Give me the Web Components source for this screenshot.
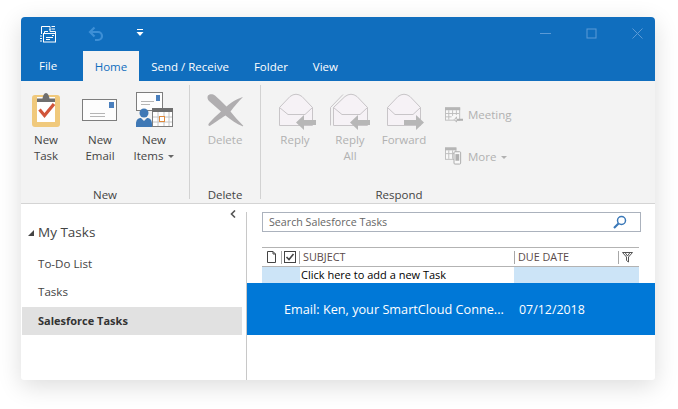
<!DOCTYPE html>
<html>
<head>
<meta charset="utf-8">
<title>Tasks</title>
<style>
  html, body { margin: 0; height: 100%; background: #fff; }
  body { box-sizing: border-box; padding: 17px 0 0 21px; font-family: "Open Sans", "Liberation Sans", sans-serif; color: #333; }
</style>
</head>
<body>
<app-window>
  <title-bar>
    <svg slot="icon" width="18" height="18" viewBox="0 0 18 18" fill="none" stroke="#fff" stroke-width="1">
      <path d="M2.500 9V1.500H11V5M12.500 1.500H16M12.500 4H16M1 11h2M1 13.500h2M1 16h2M5.500 8.500V6.500H9M11 4V6.500H16.500V8"/>
      <rect x="4.500" y="8.500" width="12" height="8.500"/>
      <path d="M7 12.500h7M7 14.500h4M13 10.500h2"/>
    </svg>
    <svg slot="undo" width="16" height="16" viewBox="0 0 16 16" fill="none" stroke="#3d8fd6" stroke-width="2.200">
      <path d="M2 6h8a4 4 0 0 1 0 8H7"/>
      <path d="M6.500 1.500L2 6L6.500 10.500"/>
    </svg>
    <svg slot="more" width="8" height="8" viewBox="0 0 8 8" fill="#fff">
      <rect x="1" y="0" width="6" height="1"/>
      <path d="M0.500 3h7L4 7z"/>
    </svg>
  </title-bar>
  <ribbon-tabs>
    <ribbon-tab class="file">File</ribbon-tab>
    <ribbon-tab active>Home</ribbon-tab>
    <ribbon-tab>Send / Receive</ribbon-tab>
    <ribbon-tab>Folder</ribbon-tab>
    <ribbon-tab>View</ribbon-tab>
  </ribbon-tabs>
  <ribbon-bar>
    <ribbon-group label="New" style="--body:168px">
      <ribbon-button style="--w:50px">
        <svg slot="icon" width="30" height="36" viewBox="0 0 30 36">
          <rect x="1" y="3" width="28" height="32" rx="3" fill="#f0c97c"/>
          <rect x="6" y="5" width="18" height="25" fill="#fff"/>
          <path d="M6 10V6.500H11.500C12 3.500 13 1 15 1S18 3.500 18.500 6.500H24V10z" fill="#6e6e6e"/>
          <path d="M8.500 17.500L13.500 23.500L23 12" fill="none" stroke="#d1553a" stroke-width="3.200"/>
        </svg>
        New<br>Task
      </ribbon-button>
      <ribbon-button style="--w:58px">
        <svg slot="icon" width="38" height="36" viewBox="0 0 38 36">
          <rect x="1.500" y="7.500" width="34" height="21" fill="#fdfdfd" stroke="#7d7d7d"/>
          <rect x="28" y="10" width="5" height="6" fill="#4a7fbd"/>
          <path d="M9 21.500h15M9 24.500h15" stroke="#b5b5b5"/>
        </svg>
        New<br>Email
      </ribbon-button>
      <ribbon-button style="--w:50px" caret>
        <svg slot="icon" width="38" height="36" viewBox="0 0 38 36">
          <rect x="1.500" y="0.500" width="26" height="18" fill="#fdfdfd" stroke="#7d7d7d"/>
          <rect x="21" y="3" width="4" height="6" fill="#4a7fbd"/>
          <path d="M6 9.500h13M6 12.500h9" stroke="#b5b5b5"/>
          <rect x="17.500" y="16.500" width="20" height="18" fill="#fff" stroke="#7d7d7d"/>
          <rect x="17" y="16" width="21" height="4" fill="#6e6e6e"/>
          <path d="M23 20v14M29 20v14M34 20v14M18 25h19M18 30h19" stroke="#c4c4c4"/>
          <rect x="24.500" y="24.500" width="5" height="5" fill="#fff" stroke="#e08a3c"/>
          <circle cx="9" cy="21" r="4.500" fill="#3f78b5"/>
          <path d="M1 35v-3c0-4 2-6 5-6l3 3l3-3c3 0 5 2 5 6v3z" fill="#3f78b5"/>
        </svg>
        New<br>Items
      </ribbon-button>
    </ribbon-group>
    <ribbon-group label="Delete" style="--body:70px">
      <ribbon-button style="--w:70px" disabled>
        <svg slot="icon" width="38" height="36" viewBox="0 0 38 36" fill="#b0aeb0">
          <path d="M37 5C33 6 27 9 20.500 14.500C16 10 12 6 9 3.500C7 2 4 1.500 2 3.500C1 5 1.500 7.500 3 9C7 12.500 11 16 15 19.500C10 24 4 29.500 2.500 32C2 33.500 3 34.500 4.500 33.500C8 31 14 27 19.500 23.500C25 28 31 32 36 34C37 34.500 37.500 34 37 33.500C33 29.500 28.500 24.500 24.500 19.500C28 14.500 33 9 37 5z"/>
        </svg>
        Delete
      </ribbon-button>
    </ribbon-group>
    <ribbon-group label="Respond" style="--body:276px">
      <ribbon-row>
        <ribbon-button style="--w:54px" disabled>
          <svg slot="icon" width="44" height="36" viewBox="0 0 44 36">
            <path d="M6.500 15.500L17 4.500Q23 0 29 4.500L39.500 15.500V33.500H6.500z" fill="#f6f2f6" stroke="#c8c5c8"/>
            <path d="M6.500 15.500L15 22.500H32L39.500 15.500" fill="none" stroke="#c8c5c8"/>
            <path d="M23 30.500L31 23V28H43V33H31V38z" fill="#b7b7b7"/>
          </svg>
          Reply
        </ribbon-button>
        <ribbon-button style="--w:56px" disabled>
          <svg slot="icon" width="44" height="36" viewBox="0 0 44 36">
            <path d="M5.500 15.500L17 4.500Q23 0 29 4.500L39.500 15.500V33.500H5.500z" fill="#f6f2f6" stroke="#c8c5c8"/>
            <path d="M5.500 15.500L14 22.500H32L39.500 15.500" fill="none" stroke="#c8c5c8"/>
            <path d="M2.500 33.500V15.500L15 2.500" fill="none" stroke="#c8c5c8"/>
            <path d="M22 30.500L30 23V28H42V33H30V38z" fill="#b7b7b7"/>
          </svg>
          Reply<br>All
        </ribbon-button>
        <ribbon-button style="--w:52px" disabled>
          <svg slot="icon" width="44" height="36" viewBox="0 0 44 36">
            <path d="M5.500 15.500L16 4.500Q22 0 28 4.500L38.500 15.500V33.500H5.500z" fill="#f6f2f6" stroke="#c8c5c8"/>
            <path d="M5.500 15.500L13 22.500H31L38.500 15.500" fill="none" stroke="#c8c5c8"/>
            <path d="M42 30.500L34 23V28H22V33H34V38z" fill="#b7b7b7"/>
          </svg>
          Forward
        </ribbon-button>
        <ribbon-stack>
          <ribbon-small>
            <svg slot="icon" width="19" height="18" viewBox="0 0 19 18" fill="none" stroke="#bdbdbd">
              <rect x="0.500" y="2.500" width="15" height="13" fill="#f8f8f8"/>
              <rect x="0" y="2" width="16" height="3" fill="#b5b5b5" stroke="none"/>
              <path d="M4 5v10M8 5v6M12 5v5M1 8.500h14M1 12h6"/>
              <path d="M10 14h9v2h-9zM12.500 11.500L9 15l3.500 3" fill="#b0b0b0" stroke="none"/>
            </svg>
            Meeting
          </ribbon-small>
          <ribbon-small caret>
            <svg slot="icon" width="19" height="20" viewBox="0 0 19 20" fill="none" stroke="#bdbdbd">
              <rect x="0.500" y="1.500" width="11" height="12" fill="#f8f8f8"/>
              <rect x="0" y="1" width="12" height="3" fill="#b5b5b5" stroke="none"/>
              <path d="M4 4v9M8 4v9M1 7.500h10"/>
              <rect x="9.500" y="5.500" width="7" height="13" rx="1" fill="#f8f8f8" stroke="#a8a8a8"/>
              <rect x="11" y="8" width="4" height="7" fill="#b0b0b0" stroke="none"/>
            </svg>
            More
          </ribbon-small>
        </ribbon-stack>
      </ribbon-row>
    </ribbon-group>
  </ribbon-bar>
  <main-split>
    <nav-pane>
      <nav-heading>My Tasks</nav-heading>
      <nav-item>To-Do List</nav-item>
      <nav-item>Tasks</nav-item>
      <nav-item selected>Salesforce Tasks</nav-item>
    </nav-pane>
    <task-pane>
      <search-box placeholder="Search Salesforce Tasks"></search-box>
      <task-header></task-header>
      <task-add-row>Click here to add a new Task</task-add-row>
      <task-row date="07/12/2018">Email: Ken, your SmartCloud Conne...</task-row>
    </task-pane>
  </main-split>
</app-window>

<script>
  // small helper so every element stays a template + shadow root
  function define(name, html) {
    const template = document.createElement('template');
    template.innerHTML = html;
    customElements.define(name, class extends HTMLElement {
      constructor() {
        super();
        this.attachShadow({mode: 'open'}).appendChild(template.content.cloneNode(true));
        const label = this.shadowRoot.querySelector('[data-label]');
        if (label) label.textContent = this.getAttribute('label') || '';
        const date = this.shadowRoot.querySelector('[data-date]');
        if (date) date.textContent = this.getAttribute('date') || '';
        const input = this.shadowRoot.querySelector('[data-placeholder]');
        if (input) input.textContent = this.getAttribute('placeholder') || '';
      }
    });
  }

  define('app-window', `
    <style>
      :host {
        display: flex;
        flex-direction: column;
        width: 634px;
        height: 363px;
        background: #fff;
        border-radius: 4px 4px 3px 3px;
        box-shadow: 0 6px 24px rgba(0,0,0,.14);
      }
    </style>
    <slot></slot>
  `);

  define('title-bar', `
    <style>
      :host {
        display: flex;
        align-items: center;
        height: 34px;
        background: #106ebe;
        border-radius: 4px 4px 0 0;
        flex: none;
      }
      .icon { margin-left: 18px; width: 18px; display: flex; }
      .undo { margin-left: 31px; display: flex; }
      .more { margin-left: 32px; display: flex; margin-top: -2px; }
      .controls { margin-left: auto; display: flex; align-items: center; margin-right: 12px; gap: 35px; margin-top: -2px; }
      svg { display: block; }
    </style>
    <div class="icon"><slot name="icon"></slot></div>
    <div class="undo"><slot name="undo"></slot></div>
    <div class="more"><slot name="more"></slot></div>
    <div class="controls">
      <svg width="11" height="11" viewBox="0 0 11 11" stroke="#5b9ad6"><path d="M0 5.500h11"/></svg>
      <svg width="11" height="11" viewBox="0 0 11 11" stroke="#5b9ad6" fill="none"><rect x="1" y="1" width="9" height="9"/></svg>
      <svg width="11" height="11" viewBox="0 0 11 11" stroke="#5b9ad6" fill="none"><path d="M0.500 0.500l10 10M10.500 0.500l-10 10"/></svg>
    </div>
  `);

  define('ribbon-tabs', `
    <style>
      :host {
        display: flex;
        height: 30px;
        background: #106ebe;
        flex: none;
      }
    </style>
    <slot></slot>
  `);

  define('ribbon-tab', `
    <style>
      :host {
        display: block;
        padding: 0 12.500px;
        font-size: 11.500px;
        line-height: 32px;
        color: #fff;
        white-space: nowrap;
      }
      :host(.file) { padding: 0 26px 0 18px; line-height: 30px; }
      :host([active]) { background: #f3f3f3; color: #106ebe; padding: 0 11.500px; }
    </style>
    <slot></slot>
  `);

  define('ribbon-bar', `
    <style>
      :host {
        display: flex;
        height: 123px;
        box-sizing: border-box;
        background: #f3f3f3;
        border-bottom: 1px solid #d4d4d4;
        flex: none;
      }
    </style>
    <slot></slot>
  `);

  define('ribbon-group', `
    <style>
      :host { display: flex; }
      .body {
        width: var(--body);
        display: flex;
        flex-direction: column;
      }
      .items { flex: 1; display: flex; }
      .label {
        text-align: center;
        font-size: 11.500px;
        line-height: 16px;
        height: 16px;
        color: #444;
      }
      .sep { width: 1px; margin: 4px 0 4px; background: #d2d2d2; }
      :host(:last-child) .sep { display: none; }
    </style>
    <div class="body">
      <div class="items"><slot></slot></div>
      <div class="label" data-label></div>
    </div>
    <div class="sep"></div>
  `);

  define('ribbon-row', `
    <style>
      :host { display: flex; padding-left: 7px; }
    </style>
    <slot></slot>
  `);

  define('ribbon-button', `
    <style>
      :host {
        display: flex;
        flex-direction: column;
        align-items: center;
        width: var(--w);
        padding-top: 11px;
        box-sizing: border-box;
        font-size: 11.500px;
        line-height: 16px;
        color: #444;
        text-align: center;
      }
      :host([disabled]) { color: #b1b1b1; }
      .icon { height: 36px; margin-bottom: 4px; display: flex; justify-content: center; }
      ::slotted(svg) { overflow: visible; }
      :host([caret]) .text::after {
        content: "";
        display: inline-block;
        margin-left: 2px;
        vertical-align: 2px;
        border: 3px solid transparent;
        border-top-color: #666;
        border-bottom-width: 0;
      }
    </style>
    <div class="icon"><slot name="icon"></slot></div>
    <div class="text"><slot></slot></div>
  `);

  define('ribbon-stack', `
    <style>
      :host { display: flex; flex-direction: column; gap: 20px; padding: 22px 0 0 15px; }
    </style>
    <slot></slot>
  `);

  define('ribbon-small', `
    <style>
      :host {
        display: flex;
        align-items: center;
        gap: 5px;
        height: 22px;
        font-size: 11.500px;
        color: #b1b1b1;
        white-space: nowrap;
      }
      .icon { width: 18px; display: flex; }
      :host([caret]) .text::after {
        content: "";
        display: inline-block;
        margin-left: 2px;
        vertical-align: 2px;
        border: 3px solid transparent;
        border-top-color: #b1b1b1;
        border-bottom-width: 0;
      }
    </style>
    <div class="icon"><slot name="icon"></slot></div>
    <div class="text"><slot></slot></div>
  `);

  define('main-split', `
    <style>
      :host { display: flex; flex: 1; min-height: 0; }
    </style>
    <slot></slot>
  `);

  define('nav-pane', `
    <style>
      :host {
        display: flex;
        position: relative;
        width: 226px;
        flex: none;
        box-sizing: border-box;
      }
      .list { flex: 1; min-width: 0; padding: 16px 4px 0 1px; }
      .splitter { width: 1px; margin-top: 8px; background: #c8c8c8; }
      .chevron { position: absolute; left: 209px; top: 6px; }
    </style>
    <div class="list"><slot></slot></div>
    <div class="splitter"></div>
    <svg class="chevron" width="6" height="8" viewBox="0 0 6 8" fill="none" stroke="#555" stroke-width="1.600"><path d="M5 0.500L1.500 4L5 7.500"/></svg>
  `);

  define('nav-heading', `
    <style>
      :host {
        display: flex;
        align-items: center;
        height: 24px;
        font-size: 13.500px;
        color: #444;
        margin-bottom: 6px;
      }
      .arrow {
        width: 0; height: 0;
        margin: 2px 4px 0 6px;
        border-left: 6px solid transparent;
        border-bottom: 6px solid #444;
      }
    </style>
    <span class="arrow"></span><slot></slot>
  `);

  define('nav-item', `
    <style>
      :host {
        display: block;
        height: 28px;
        line-height: 28px;
        padding-left: 16px;
        font-size: 11.600px;
        color: #444;
      }
      :host([selected]) { margin-top: 1px; line-height: 27px; background: #e1e1e1; font-weight: 700; font-size: 11px; color: #333; }
    </style>
    <slot></slot>
  `);

  define('task-pane', `
    <style>
      :host { display: block; flex: 1; min-width: 0; padding-top: 8px; }
    </style>
    <slot></slot>
  `);

  define('search-box', `
    <style>
      :host {
        display: flex;
        align-items: center;
        justify-content: space-between;
        box-sizing: border-box;
        height: 20px;
        margin: 0 14px 15px 15px;
        padding: 0 13px 0 6px;
        border: 1px solid #abb2bd;
        font-size: 10.700px;
        color: #666;
      }
    </style>
    <span data-placeholder></span>
    <svg width="14" height="14" viewBox="0 0 14 14" fill="none" stroke="#3a78b8">
      <circle cx="8.500" cy="5.500" r="4" stroke-width="1.500"/>
      <path d="M5.500 8.500L1 13" stroke-width="2.200"/>
    </svg>
  `);

  define('task-header', `
    <style>
      :host {
        display: grid;
        grid-template-columns: 19px 18px 215px 104px 21px;
        height: 20px;
        box-sizing: border-box;
        margin: 0 16px 0 15px;
        border-top: 1px solid #b3b3b3;
        border-bottom: 1px solid #b3b3b3;
        font-size: 10.800px;
        color: #5a4a4a;
      }
      .cell { display: flex; align-items: center; position: relative; padding-left: 4px; }
      .label { padding-bottom: 2px; }
      .cell + .cell::before {
        content: "";
        position: absolute;
        left: 0; top: 3px; bottom: 2px;
        width: 1px;
        background: #a8a8a8;
      }
      svg { display: block; }
    </style>
    <div class="cell">
      <svg width="11" height="12" viewBox="0 0 11 12" fill="#fff" stroke="#444"><path d="M1.500 0.500H7L9.500 3V11.500H1.500zM7 0.500V3H9.500"/></svg>
    </div>
    <div class="cell" style="padding-left:3px">
      <svg width="13" height="13" viewBox="0 0 13 13" fill="none" stroke="#444"><rect x="0.500" y="0.500" width="11" height="11"/><path d="M2.500 6L5 8.500L9.500 3" stroke-width="1.600"/></svg>
    </div>
    <div class="cell label">SUBJECT</div>
    <div class="cell label">DUE DATE</div>
    <div class="cell">
      <svg width="11" height="11" viewBox="0 0 11 11" fill="#fff" stroke="#555"><path d="M0.500 0.500H10.500L6.500 5V10L4.500 8.500V5zM3 0.500L5.500 4L8 0.500"/></svg>
    </div>
  `);

  define('task-add-row', `
    <style>
      :host {
        display: grid;
        grid-template-columns: 38px 214px 125px;
        height: 16px;
        margin: 0 16px 0 15px;
        font-size: 11px;
        line-height: 16px;
        color: #000;
        background: #cce4f7;
      }
      .subject { background: #fff; padding-left: 1px; white-space: nowrap; }
    </style>
    <div></div>
    <div class="subject"><slot></slot></div>
    <div></div>
  `);

  define('task-row', `
    <style>
      :host {
        display: flex;
        align-items: center;
        height: 52px;
        background: #0078d7;
        color: #fff;
        font-size: 12.700px;
      }
      .subject { width: 235px; padding-left: 37px; white-space: nowrap; box-sizing: content-box; }
      .date { font-size: 12.400px; }
    </style>
    <div class="subject"><slot></slot></div>
    <div class="date" data-date></div>
  `);
</script>
</body>
</html>
